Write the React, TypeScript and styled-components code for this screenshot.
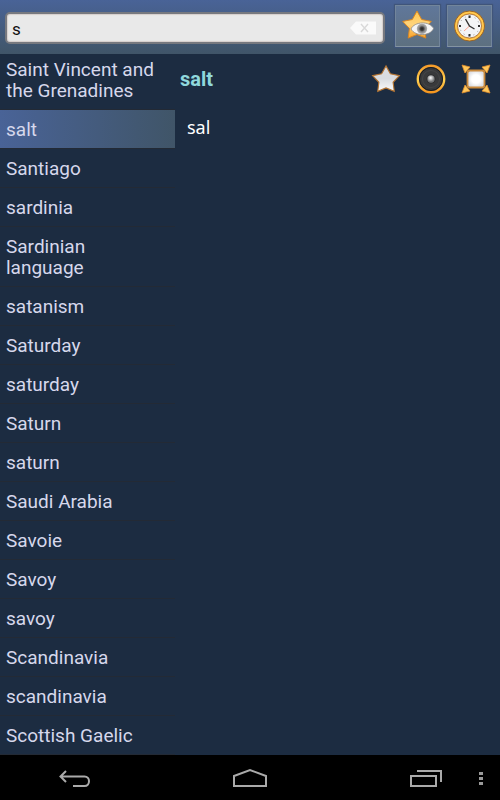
import React, { useState } from "react";
import styled, { createGlobalStyle } from "styled-components";

const GlobalStyle = createGlobalStyle`
  *, *::before, *::after { box-sizing: border-box; }
  body {
    margin: 0;
    background: #1c2c41;
    font-family: Roboto, "Liberation Sans", sans-serif;
  }
`;

const Screen = styled.div`
  display: flex;
  flex-direction: column;
  height: 100vh;
  background: #1c2c41;
`;

const SearchBar = styled.header`
  display: flex;
  flex: none;
  align-items: center;
  gap: 7px;
  height: 54px;
  padding: 0 8px 2px 5px;
  background: linear-gradient(#496397, #405568);
`;

const SearchField = styled.label`
  display: flex;
  flex: 1;
  align-items: center;
  min-width: 0;
  height: 32px;
  margin: 4px 3px 0 0;
  padding: 0 6px 0 5px;
  border: 2px solid #77797f;
  border-radius: 5px;
  background: #e9e9e9;
  box-shadow: inset 0 0 1px 1px #d6cfcc;
`;

const SearchInput = styled.input`
  flex: 1;
  min-width: 0;
  padding: 2px 0 0;
  border: 0;
  outline: 0;
  background: transparent;
  color: #111;
  font: 400 17px Roboto, "Liberation Sans", sans-serif;
`;

const PlainButton = styled.button`
  display: grid;
  flex: none;
  place-items: center;
  padding: 0;
  border: 0;
  background: transparent;
  cursor: pointer;
`;

const ToolButton = styled(PlainButton)`
  width: 45px;
  height: 42px;
  border: 1px solid #72859b;
  border-bottom-color: #8494a2;
  background: linear-gradient(#60779a, #5d7080);
  box-shadow: 0 0 1px 1px #40557a;
`;

const Content = styled.main`
  display: flex;
  flex: 1;
  min-height: 0;
`;

const WordList = styled.ul`
  flex: 0 0 35%;
  margin: 0;
  padding: 0;
  overflow: hidden;
  list-style: none;
`;

const WordItem = styled.li`
  &:first-child { margin-top: -4px; }
`;

const WordButton = styled.button<{ $selected: boolean }>`
  display: block;
  width: 100%;
  padding: 9px 12px 8px 6px;
  border: 0;
  border-bottom: 1px solid #232a35;
  background: ${(p) => (p.$selected ? "linear-gradient(90deg, #496397, #405568)" : "transparent")};
  color: #d6d8ec;
  font: 400 19px/21px Roboto, "Liberation Sans", sans-serif;
  text-align: left;
  cursor: pointer;
`;

const Article = styled.section`
  flex: 1;
  min-width: 0;
`;

const ArticleHeader = styled.div`
  display: flex;
  align-items: center;
  gap: 15px;
  height: 49px;
  padding: 0 9px 0 5px;
`;

const Headword = styled.h1`
  flex: 1;
  margin: 0;
  color: #90d8dc;
  font-size: 20px;
  font-weight: 700;
  line-height: 24px;
`;

const Translation = styled.p`
  margin: 0;
  padding: 12px;
  color: #fff;
  font-family: "Noto Sans", sans-serif;
  font-size: 18px;
  line-height: 24px;
`;

const NavBar = styled.nav`
  display: grid;
  flex: none;
  grid-template-columns: 3fr 4fr 3fr;
  height: 45px;
  background: #000;
`;

const NavButton = styled(PlainButton)`
  height: 45px;
`;

const NavEnd = styled.div`
  display: grid;
  grid-template-columns: 1fr 38px;
  padding-left: 40px;
`;

const STAR =
  "M16 2l4.700 8.500 9.600 1.900-6.700 7.100 1.200 9.600-8.800-3.600-8.800 3.600 1.200-9.600L1.700 12.400l9.600-1.900z";

function ClearIcon() {
  return (
    <svg width="28" height="14" viewBox="0 0 28 14" aria-hidden="true">
      <path d="M7 0.5h20v13H7L1 7z" fill="#fafafa" />
      <path d="M12 3l7 8M19 3l-7 8" stroke="#d9d9d9" strokeWidth="1.4" />
    </svg>
  );
}

function WatchedIcon() {
  return (
    <svg width="34" height="34" viewBox="0 0 34 34" aria-hidden="true">
      <defs>
        <linearGradient id="gold" x1="0" y1="0" x2="0" y2="1">
          <stop offset="0" stopColor="#ffc74e" />
          <stop offset="0.5" stopColor="#ffd47c" />
          <stop offset="1" stopColor="#f8a22a" />
        </linearGradient>
        <radialGradient id="iris">
          <stop offset="0" stopColor="#222" />
          <stop offset="0.35" stopColor="#444" />
          <stop offset="0.6" stopColor="#888" />
          <stop offset="1" stopColor="#b4b4b4" />
        </radialGradient>
      </defs>
      <path d={STAR} fill="url(#gold)" stroke="#d98622" />
      <path d="M10 20c3-7.500 19-8.500 22.500-.4-3 7.500-18 8.300-22.500.4z" fill="#f4f4f4" stroke="#8a8b8d" strokeWidth="0.8" />
      <circle cx="21" cy="19.800" r="5.200" fill="url(#iris)" />
    </svg>
  );
}

function ClockIcon() {
  return (
    <svg width="34" height="34" viewBox="0 0 34 34" aria-hidden="true">
      <circle cx="16.500" cy="17" r="15" fill="#f8aa32" stroke="#9b6422" />
      <circle cx="16.500" cy="17" r="13.500" fill="none" stroke="#ffcb52" strokeWidth="1.500" />
      <circle cx="16.500" cy="17" r="12" fill="#f3f4f6" stroke="#a3692c" strokeWidth="0.800" />
      <circle cx="16.500" cy="17" r="9.800" fill="none" stroke="#999" strokeWidth="1" strokeDasharray="1 4.130" />
      <path d="M16.500 6.500v2.500M16.500 25v2.500M6 17h2M25 17h2" stroke="#333" strokeWidth="2" />
      <path d="M16.500 17l-5.500 5" stroke="#ff9d88" strokeWidth="0.900" />
      <path d="M12.500 10l4 7 5 3" fill="none" stroke="#333" strokeWidth="1.400" />
    </svg>
  );
}

function StarIcon() {
  return (
    <svg width="30" height="30" viewBox="0 0 32 32" aria-hidden="true">
      <defs>
        <linearGradient id="silver" x1="0" y1="0" x2="0" y2="1">
          <stop offset="0" stopColor="#dcdde0" />
          <stop offset="0.5" stopColor="#d9dce0" />
          <stop offset="1" stopColor="#fafafa" />
        </linearGradient>
      </defs>
      <path d={STAR} fill="url(#silver)" stroke="#b47431" strokeWidth="1.200" />
    </svg>
  );
}

function SpeakerIcon() {
  return (
    <svg width="30" height="30" viewBox="0 0 30 30" aria-hidden="true">
      <defs>
        <radialGradient id="cap" cx="0.45" cy="0.35">
          <stop offset="0" stopColor="#fff" />
          <stop offset="1" stopColor="#77797b" />
        </radialGradient>
        <linearGradient id="ring" x1="0" y1="0" x2="0" y2="1">
          <stop offset="0" stopColor="#f59c2a" />
          <stop offset="0.55" stopColor="#ffd050" />
          <stop offset="1" stopColor="#f5951e" />
        </linearGradient>
      </defs>
      <circle cx="15" cy="15" r="13.200" fill="#38393b" stroke="url(#ring)" strokeWidth="2.400" />
      <circle cx="15" cy="15" r="11.500" fill="none" stroke="#1b1c1f" />
      <circle cx="15" cy="15" r="8.500" fill="none" stroke="#454648" />
      <circle cx="15" cy="15" r="4.500" fill="#2a2a2b" />
      <circle cx="15" cy="15" r="3.700" fill="url(#cap)" />
    </svg>
  );
}

function ExpandIcon() {
  return (
    <svg width="30" height="30" viewBox="0 0 30 30" aria-hidden="true">
      <defs>
        <radialGradient id="pane">
          <stop offset="0.5" stopColor="#fff" />
          <stop offset="1" stopColor="#dddfe4" />
        </radialGradient>
      </defs>
      <path d="M1 1l8 2-5 6zM29 1l-8 2 5 6zM1 29l3-8 5 6zM29 29l-3-8-5 6z" fill="#ffc75a" stroke="#e28f2c" strokeWidth="0.800" strokeLinejoin="round" />
      <rect x="6.500" y="6.500" width="17" height="17" rx="2.500" fill="url(#pane)" stroke="#ca8a3c" strokeWidth="1.800" />
    </svg>
  );
}

function BackIcon() {
  return (
    <svg width="32" height="18" viewBox="0 0 32 18" fill="none" stroke="#aaa" strokeWidth="2" aria-hidden="true">
      <path d="M7 2L1.500 7.500 7 13M2 7.500h23.500c6 0 6 9.500 0 9.500H14" />
    </svg>
  );
}

function HomeIcon() {
  return (
    <svg width="36" height="20" viewBox="0 0 36 20" fill="none" stroke="#aaa" strokeWidth="2" aria-hidden="true">
      <path d="M2 8L18 2l16 6v10H2z" />
    </svg>
  );
}

function RecentIcon() {
  return (
    <svg width="32" height="18" viewBox="0 0 32 18" fill="none" stroke="#aaa" strokeWidth="2" aria-hidden="true">
      <path d="M1 7h25v10H1zM7 2h24v11" />
    </svg>
  );
}

function MoreIcon() {
  return (
    <svg width="4" height="14" viewBox="0 0 4 14" fill="#999" aria-hidden="true">
      <path d="M0 1h4v3H0zM0 6h4v3H0zM0 11h4v3H0z" />
    </svg>
  );
}

const WORDS = [
  "Saint Vincent and the Grenadines",
  "salt",
  "Santiago",
  "sardinia",
  "Sardinian language",
  "satanism",
  "Saturday",
  "saturday",
  "Saturn",
  "saturn",
  "Saudi Arabia",
  "Savoie",
  "Savoy",
  "savoy",
  "Scandinavia",
  "scandinavia",
  "Scottish Gaelic",
];

export default function App() {
  const [query, setQuery] = useState("s");
  const [selected, setSelected] = useState("salt");

  return (
    <Screen>
      <GlobalStyle />
      <SearchBar>
        <SearchField>
          <SearchInput aria-label="Search word" value={query} onChange={(e) => setQuery(e.target.value)} />
          <PlainButton aria-label="Clear search" onClick={() => setQuery("")}>
            <ClearIcon />
          </PlainButton>
        </SearchField>
        <ToolButton aria-label="Show favorites"><WatchedIcon /></ToolButton>
        <ToolButton aria-label="History"><ClockIcon /></ToolButton>
      </SearchBar>
      <Content>
        <WordList>
          {WORDS.map((word) => (
            <WordItem key={word}>
              <WordButton $selected={word === selected} onClick={() => setSelected(word)}>{word}</WordButton>
            </WordItem>
          ))}
        </WordList>
        <Article>
          <ArticleHeader>
            <Headword>salt</Headword>
            <PlainButton aria-label="Add to favorites"><StarIcon /></PlainButton>
            <PlainButton aria-label="Pronounce"><SpeakerIcon /></PlainButton>
            <PlainButton aria-label="Full screen"><ExpandIcon /></PlainButton>
          </ArticleHeader>
          <Translation>sal</Translation>
        </Article>
      </Content>
      <NavBar>
        <NavButton aria-label="Back"><BackIcon /></NavButton>
        <NavButton aria-label="Home"><HomeIcon /></NavButton>
        <NavEnd>
          <NavButton aria-label="Recent apps"><RecentIcon /></NavButton>
          <NavButton aria-label="More options"><MoreIcon /></NavButton>
        </NavEnd>
      </NavBar>
    </Screen>
  );
}
